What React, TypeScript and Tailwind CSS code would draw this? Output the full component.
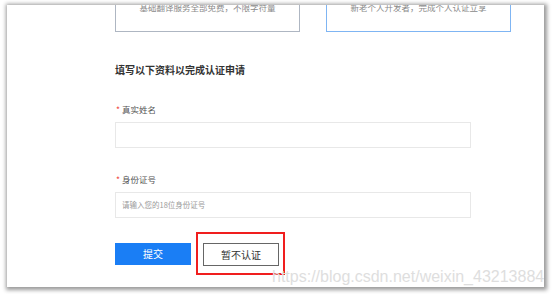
import React from "react";

const cjk = { fontFamily: '"Noto Sans CJK SC", "Noto Sans", sans-serif' };

export default function App() {
  return (
    <div className="w-[553px] h-[294px] bg-white overflow-hidden pl-[7px] pt-[5px]" style={cjk}>
      <div className="relative w-[537px] h-[282px] bg-white overflow-hidden shadow-[1px_1px_4px_2px_rgba(0,0,0,0.4)]">
        <div className="pl-[108px] mt-[-33px] flex flex-col">
          <div className="flex gap-[26px]">
            <div className="w-[185px] h-[60px] border border-[#aeb6c2] pt-[28px] text-center text-[8.5px] leading-[12px] text-[#8a8a8a]">
              基础翻译服务全部免费，不限字符量
            </div>
            <div className="w-[185px] h-[60px] border border-[#7fb5f3] pt-[28px] text-center text-[8.5px] leading-[12px] text-[#8a8a8a]">
              新老个人开发者，完成个人认证立享
            </div>
          </div>

          <div className="mt-[31px] text-[10px] leading-[14px] font-bold text-[#333]">
            填写以下资料以完成认证申请
          </div>

          <div className="mt-[26px] flex items-center text-[8.5px] leading-[12px] text-[#555]">
            <span className="text-[#f0493e] mr-[2px] ml-[1px]">*</span>
            <span>真实姓名</span>
          </div>
          <div className="mt-[7px] w-[356px] h-[26px] border border-[#e8e8e8] bg-white" />

          <div className="mt-[25px] flex items-center text-[8.5px] leading-[12px] text-[#555]">
            <span className="text-[#f0493e] mr-[2px] ml-[1px]">*</span>
            <span>身份证号</span>
          </div>
          <div className="mt-[7px] w-[356px] h-[26px] border border-[#e8e8e8] bg-white flex items-center pl-[6px] text-[7.5px] text-[#9a9a9a]">
            请输入您的18位身份证号
          </div>

          <div className="mt-[14px] flex items-center">
            <div className="w-[76px] h-[22px] bg-[#1a7ef5] text-white text-[10px] flex items-center justify-center">
              提交
            </div>
            <div className="ml-[5px] w-[89px] h-[43px] border-2 border-[#f01e1e] flex items-center pl-[5px] pt-[2px]">
              <div className="w-[76px] h-[23px] border border-[#666] bg-white text-[10px] text-[#333] flex items-center justify-center">
                暂不认证
              </div>
            </div>
          </div>
        </div>

        <div
          className="absolute left-[265px] top-[262px] text-[16px] leading-[20px] text-[#dedede] whitespace-nowrap"
          style={{ fontFamily: '"Liberation Sans", Arial, sans-serif' }}
        >
          https://blog.csdn.net/weixin_43213884
        </div>
      </div>
    </div>
  );
}
